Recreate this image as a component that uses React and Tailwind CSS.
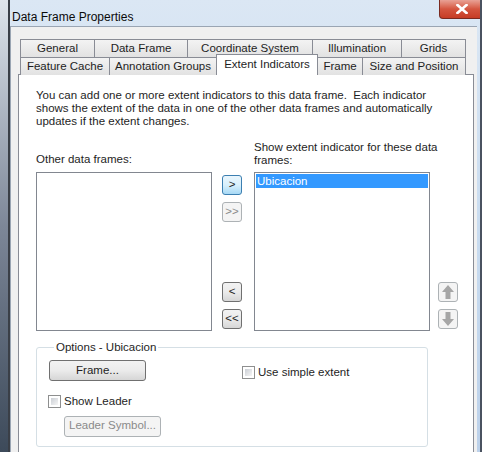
import React from 'react';

const FONT = { fontFamily: '"Liberation Sans", Arial, sans-serif' };

const Tab = ({ label, w, active }) => (
    <div
        className={`h-[18px] flex items-center justify-center border border-[#898c95] border-b-0 -mr-px text-[11.5px] text-[#1e1e1e] ${active ? 'bg-white h-[21px] -mt-[3px] relative z-10' : 'bg-gradient-to-b from-[#f3f3f3] to-[#e2e2e2]'}`}
        style={{ width: w }}
    >
        {label}
    </div>
);

const Btn = ({ children, className = '', variant = 'normal' }) => {
    let look = 'border-[#707070] bg-gradient-to-b from-[#f2f2f2] via-[#ebebeb] to-[#d6d6d6] text-[#1e1e1e]';
    if (variant === 'hot') look = 'border-[#3c7fb1] bg-gradient-to-b from-[#eaf6fd] via-[#d9f0fc] to-[#a7d9f5] text-[#1e1e1e]';
    if (variant === 'off') look = 'border-[#adb2b5] bg-[#f4f4f4] text-[#8a8a8a]';
    return (
        <div className={`border rounded-[3px] flex items-center justify-center text-[11.5px] ${look} ${className}`}>
            {children}
        </div>
    );
};

const Check = ({ label }) => (
    <div className="flex items-center gap-[3px]">
        <div className="w-[13px] h-[13px] border border-[#8e8f8f] bg-white p-[2px]">
            <div className="w-full h-full bg-gradient-to-br from-[#cbcfd5] to-[#f6f6f6]"></div>
        </div>
        <span className="text-[11.5px] text-[#1e1e1e]">{label}</span>
    </div>
);

const Arrow = ({ down }) => (
    <svg width="12" height="14" viewBox="0 0 12 14" className={down ? 'rotate-180' : ''}>
        <path d="M6 0 L12 7 L8.5 7 L8.5 14 L3.5 14 L3.5 7 L0 7 Z" fill="#a6a6a6" />
    </svg>
);

export default function App() {
    const row1 = [['General', 75], ['Data Frame', 94], ['Coordinate System', 126], ['Illumination', 90], ['Grids', 65]];
    const row2 = [['Feature Cache', 90], ['Annotation Groups', 108], ['Extent Indicators', 102, true], ['Frame', 46], ['Size and Position', 104]];

    return (
        <div className="w-[482px] h-[452px] overflow-hidden flex bg-gradient-to-b from-[#dbe7f4] via-[#c9dcf0] to-[#bcd1ea]" style={FONT}>
            {/* desktop sliver on the left */}
            <div className="w-[8px] bg-gradient-to-b from-[#dfe5ec] via-[#7d8798] to-[#3d4a5a]"></div>
            <div className="w-[2px] bg-[#3a3f47]"></div>

            <div className="flex-1 flex flex-col">
                {/* title bar */}
                <div className="h-[30px] flex items-start justify-between">
                    <span className="text-[12px] text-[#0b0b0b] mt-[8px] ml-[2px]">Data Frame Properties</span>
                    <div className="w-[46px] h-[19px] -mr-[5px] rounded-b-[4px] border border-t-0 border-[#7a2a20] bg-gradient-to-b from-[#e8a195] via-[#d4553f] to-[#c63c25] flex items-center justify-center">
                        <svg width="12" height="10" viewBox="0 0 12 10">
                            <path d="M1.5 1 L10.5 9 M10.5 1 L1.5 9" stroke="#fff" strokeWidth="2.6" strokeLinecap="square" />
                        </svg>
                    </div>
                </div>

                {/* client area */}
                <div className="flex-1 bg-[#f0f0f0] border-l border-t border-[#9aa5b3] mr-[3px] pl-[7px] pt-[12px]">
                    <div className="pl-[2px]">
                        <div className="flex">
                            {row1.map(([l, w]) => <Tab key={l} label={l} w={w} />)}
                        </div>
                        <div className="flex">
                            {row2.map(([l, w, a]) => <Tab key={l} label={l} w={w} active={a} />)}
                        </div>
                    </div>

                    <div className="w-[456px] h-[400px] -mt-px bg-white border border-[#898c95] pl-[17px] pt-[14px] text-[11.5px] text-[#1e1e1e]">
                        <p className="leading-[13px] w-[410px]">
                            You can add one or more extent indicators to this data frame.&nbsp; Each indicator shows the extent of the data in one of the other data frames and automatically updates if the extent changes.
                        </p>

                        <div className="flex items-end mt-[13px] leading-[13px]">
                            <div className="w-[218px] pb-[6px]">Other data frames:</div>
                            <div className="w-[186px] pb-[5px]">Show extent indicator for these data frames:</div>
                        </div>

                        <div className="flex">
                            <div className="w-[176px] h-[159px] border border-[#828790] bg-white"></div>
                            <div className="w-[20px] ml-[10px] mr-[12px] h-[159px] flex flex-col pt-[3px]">
                                <Btn variant="hot" className="h-[20px]">&gt;</Btn>
                                <Btn variant="off" className="h-[20px] mt-[7px]">&gt;&gt;</Btn>
                                <div className="flex-1"></div>
                                <Btn className="h-[20px]">&lt;</Btn>
                                <Btn className="h-[20px] mt-[7px] mb-[2px]">&lt;&lt;</Btn>
                            </div>
                            <div className="w-[176px] h-[159px] border border-[#828790] bg-white p-px">
                                <div className="h-[14px] bg-[#3399ff] text-white leading-[14px] pl-px">Ubicacion</div>
                            </div>
                            <div className="w-[20px] ml-[8px] h-[159px] flex flex-col justify-end pb-[2px] gap-[7px]">
                                <Btn variant="off" className="h-[20px]"><Arrow /></Btn>
                                <Btn variant="off" className="h-[20px]"><Arrow down /></Btn>
                            </div>
                        </div>

                        <fieldset className="w-[392px] h-[106px] mt-[10px] border border-[#d5dfe5] rounded-[3px] px-[12px] pt-[6px]">
                            <legend className="px-[2px] ml-[5px] leading-[13px]">Options - Ubicacion</legend>
                            <div className="flex items-start">
                                <Btn className="w-[97px] h-[21px]">Frame...</Btn>
                                <div className="ml-[96px] mt-[4px]"><Check label="Use simple extent" /></div>
                            </div>
                            <div className="mt-[12px] -ml-px"><Check label="Show Leader" /></div>
                            <Btn variant="off" className="w-[97px] h-[21px] ml-[15px] mt-[5px]">Leader Symbol...</Btn>
                        </fieldset>
                    </div>
                </div>
            </div>
            <div className="w-[2px] bg-[#4a5260]"></div>
        </div>
    );
}
